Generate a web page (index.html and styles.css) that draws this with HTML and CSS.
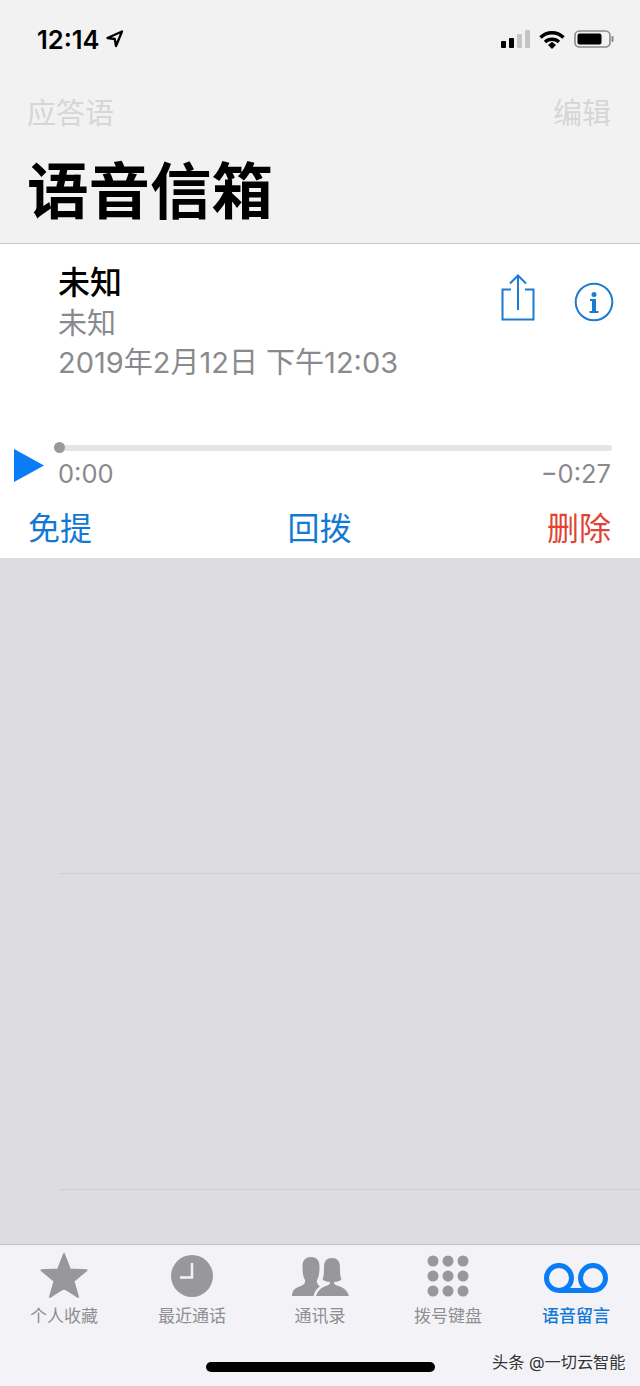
FILE: index.html
```html
<!DOCTYPE html>
<html lang="zh-CN">
<head>
  <meta charset="UTF-8">
  <meta name="viewport" content="width=device-width, initial-scale=1.0">
  <title>语音信箱</title>
  <link rel="stylesheet" href="styles.css">
</head>
<body>
  <div class="phone">
    <header class="header">
      <div class="status">
        <div class="clock">
          <span>12:14</span>
          <svg class="arrow-icon" width="18" height="18" viewBox="0 0 18 18"><path d="M1.500 8 16 1.500 10 16 8.800 9Z" fill="none" stroke="#000" stroke-width="2.300" stroke-linejoin="round"/></svg>
        </div>
        <div class="indicators">
          <svg width="29" height="18" viewBox="0 0 29 18">
            <rect x="0" y="11" width="5" height="7" rx="1" fill="#000"/>
            <rect x="8" y="8" width="5" height="10" rx="1" fill="#000"/>
            <rect x="16" y="4" width="5" height="14" rx="1" fill="#c4c4c4"/>
            <rect x="24" y="0" width="5" height="18" rx="1" fill="#c4c4c4"/>
          </svg>
          <svg width="26" height="19" viewBox="0 0 26 19">
            <path d="M1.500 7.500C8 1.200 18 1.200 24.500 7.500" fill="none" stroke="#000" stroke-width="3.400"/>
            <path d="M6 12C10 8.300 16 8.300 20 12" fill="none" stroke="#000" stroke-width="3.400"/>
            <path d="M9 15 13 11.800 17 15 13 19Z" fill="#000"/>
          </svg>
          <svg width="40" height="18" viewBox="0 0 40 18">
            <rect x="1" y="1" width="35" height="16" rx="4.500" fill="none" stroke="#8a8a8a" stroke-width="1.600"/>
            <rect x="3.500" y="3.500" width="24" height="11" rx="2" fill="#000"/>
            <rect x="37.500" y="6" width="2" height="6" rx="1" fill="#8a8a8a"/>
          </svg>
        </div>
      </div>
      <div class="nav">
        <span>应答语</span>
        <span>编辑</span>
      </div>
      <h1 class="title">语音信箱</h1>
    </header>

    <section class="card">
      <div class="message">
        <div class="message-text">
          <div class="name">未知</div>
          <div class="sub">未知</div>
          <div class="sub">2019年2月12日 下午12:03</div>
        </div>
        <div class="message-icons">
          <svg width="36" height="48" viewBox="0 0 36 48">
            <path d="M11 15.500H2.500V45.500H33.500V15.500H25M18 36V2M10 9.500 18 1.500 26 9.500" fill="none" stroke="#1a7bcf" stroke-width="2"/>
          </svg>
          <svg width="40" height="40" viewBox="0 0 40 40">
            <circle cx="20" cy="20" r="18.300" fill="none" stroke="#1a7bcf" stroke-width="2"/>
            <circle cx="20" cy="12.500" r="2.500" fill="#1a7bcf"/>
            <path d="M16 17H22V29H24.500V31H15.500V29H18V19H16Z" fill="#1a7bcf"/>
          </svg>
        </div>
      </div>
      <div class="player">
        <svg class="play" width="30" height="33" viewBox="0 0 30 33"><path d="M0 0 30 16.500 0 33Z" fill="#0a7cf5"/></svg>
        <div class="track-wrap">
          <div class="track"><div class="thumb"></div></div>
          <div class="times">
            <span>0:00</span>
            <span>−0:27</span>
          </div>
        </div>
      </div>
      <div class="actions">
        <span class="blue">免提</span>
        <span class="blue">回拨</span>
        <span class="red">删除</span>
      </div>
    </section>

    <main class="list">
      <div class="list-row"></div>
      <div class="list-row"></div>
    </main>

    <footer class="tabbar">
      <div class="tabs">
        <div class="tab">
          <svg width="48" height="46" viewBox="0 0 48 46"><path d="M24 2 30 17.500 46.500 18.300 33.500 29 38 45 24 36 10 45 14.500 29 1.500 18.300 18 17.500Z" fill="#98989c" stroke="#98989c" stroke-width="2" stroke-linejoin="round"/></svg>
          <span>个人收藏</span>
        </div>
        <div class="tab">
          <svg width="44" height="46" viewBox="0 0 44 46"><circle cx="22" cy="24" r="21" fill="#98989c"/><path d="M22 11V25.500H10" fill="none" stroke="#f3f2f6" stroke-width="2.500"/></svg>
          <span>最近通话</span>
        </div>
        <div class="tab">
          <svg width="58" height="46" viewBox="0 0 58 46" fill="#98989c">
            <path d="M1 44C1 38 4 36 10 34C13 33 14.500 31 14 28C12 25 11.500 20 11.500 14C11.500 8 15 5 20 5C25 5 28.500 8 28.500 14C28.500 20 28 25 26 28C25.500 31 27 33 29 34.500C26 36 24 39 22.500 44Z"/>
            <path d="M25 44C27 38 31 35 36 33.500C38 33 39 32 39 30C36 30 33 29 31.500 27.500C33 24 33 20 33 15C33 9 36 6 41 6C46 6 49 9 49 15C49 20 49 24 50.500 27.500C49 29 46 30 43 30C43 32 44 33 46 33.500C52 35 56 38 58 44Z"/>
          </svg>
          <span>通讯录</span>
        </div>
        <div class="tab">
          <svg width="44" height="46" viewBox="0 0 44 46" fill="#98989c">
            <circle cx="7" cy="9" r="5.500"/><circle cx="22" cy="9" r="5.500"/><circle cx="37" cy="9" r="5.500"/>
            <circle cx="7" cy="24" r="5.500"/><circle cx="22" cy="24" r="5.500"/><circle cx="37" cy="24" r="5.500"/>
            <circle cx="7" cy="39" r="5.500"/><circle cx="22" cy="39" r="5.500"/><circle cx="37" cy="39" r="5.500"/>
          </svg>
          <span>拨号键盘</span>
        </div>
        <div class="tab active">
          <svg width="66" height="46" viewBox="0 0 66 46"><path d="M16 38.500H50M16 38.500A12.500 12.500 0 1 1 16 13.500A12.500 12.500 0 0 1 16 38.500ZM50 38.500A12.500 12.500 0 1 1 50 13.500A12.500 12.500 0 0 1 50 38.500Z" fill="none" stroke="#0a7cf5" stroke-width="5"/></svg>
          <span>语音留言</span>
        </div>
      </div>
      <div class="home-bar"></div>
      <div class="watermark">头条 @一切云智能</div>
    </footer>
  </div>
</body>
</html>
```

FILE: styles.css
```css
* {
  box-sizing: border-box;
}

body {
  margin: 0;
  font-family: Inter, "Noto Sans CJK SC", sans-serif;
}

.phone {
  width: 640px;
  height: 1386px;
  display: flex;
  flex-direction: column;
  overflow: hidden;
  background-color: #dddce0;
}

.header {
  height: 244px;
  background-color: #f2f2f2;
  border-bottom: 1px solid #c8c8ca;
}

.status {
  height: 78px;
  padding: 0 26px 0 37px;
  display: flex;
  justify-content: space-between;
  align-items: center;
}

.clock {
  display: flex;
  align-items: center;
  gap: 6px;
  font-size: 25.500px;
  font-weight: 600;
  color: #000;
}

.indicators {
  display: flex;
  align-items: center;
  gap: 9px;
}

.nav {
  height: 66px;
  padding: 0 29px 0 27px;
  display: flex;
  justify-content: space-between;
  align-items: center;
  font-size: 29px;
  color: #d6d6d6;
}

.title {
  margin: 4px 0 0;
  padding-left: 27px;
  font-size: 61.500px;
  line-height: 88px;
  font-weight: 700;
  color: #000;
}

.card {
  height: 314px;
  background-color: #fff;
}

.message {
  height: 187px;
  padding: 19px 26px 0 58px;
  display: flex;
  justify-content: space-between;
}

.name {
  font-size: 32px;
  line-height: 40px;
  font-weight: 500;
  color: #000;
}

.sub {
  font-size: 29px;
  line-height: 40px;
  color: #8a8a8e;
}

.name + .sub {
  margin-top: 1px;
  margin-bottom: -1px;
}

.message-icons {
  display: flex;
  align-items: flex-start;
  gap: 38px;
  padding-top: 11px;
}

.message-icons svg:last-child {
  margin-top: 8px;
}

.player {
  height: 71px;
  padding: 0 28px 0 14px;
  display: flex;
  gap: 15px;
}

.play {
  margin-top: 18px;
  flex: none;
}

.track-wrap {
  flex: 1;
  padding-top: 14px;
}

.track {
  height: 6px;
  position: relative;
  border-radius: 3px;
  background-color: #e5e5e5;
}

.thumb {
  position: absolute;
  left: -5px;
  top: -3px;
  width: 11px;
  height: 11px;
  border-radius: 50%;
  background-color: #999;
}

.times {
  margin: 7px 1px 0 -1px;
  display: flex;
  justify-content: space-between;
  font-size: 25.500px;
  line-height: 32px;
  color: #8a8a8e;
}

.actions {
  height: 56px;
  padding: 0 29px 8px 28px;
  display: flex;
  justify-content: space-between;
  align-items: center;
  font-size: 32px;
}

.blue {
  color: #1279d6;
}

.red {
  color: #e04434;
}

.list {
  flex: 1;
}

.list-row {
  height: 316px;
  margin-left: 59px;
  border-bottom: 1px solid #cfced3;
}

.tabbar {
  height: 142px;
  position: relative;
  background-color: #f3f2f6;
  border-top: 1px solid #c4c4c6;
}

.tabs {
  display: grid;
  grid-template-columns: repeat(5, 1fr);
  padding-top: 7px;
}

.tab {
  display: flex;
  flex-direction: column;
  align-items: center;
  font-size: 17px;
  line-height: 24px;
  color: #8e8e93;
}

.tab span {
  margin-top: 6px;
}

.tab.active {
  color: #1279d6;
  font-weight: 500;
}

.home-bar {
  width: 229px;
  height: 10px;
  margin: 34px auto 0;
  border-radius: 5px;
  background-color: #000;
}

.watermark {
  position: absolute;
  left: 492px;
  top: 106px;
  font-size: 16.200px;
  line-height: 22px;
  color: #333;
  text-shadow: 0 0 2px #fff;
  white-space: nowrap;
}
```
